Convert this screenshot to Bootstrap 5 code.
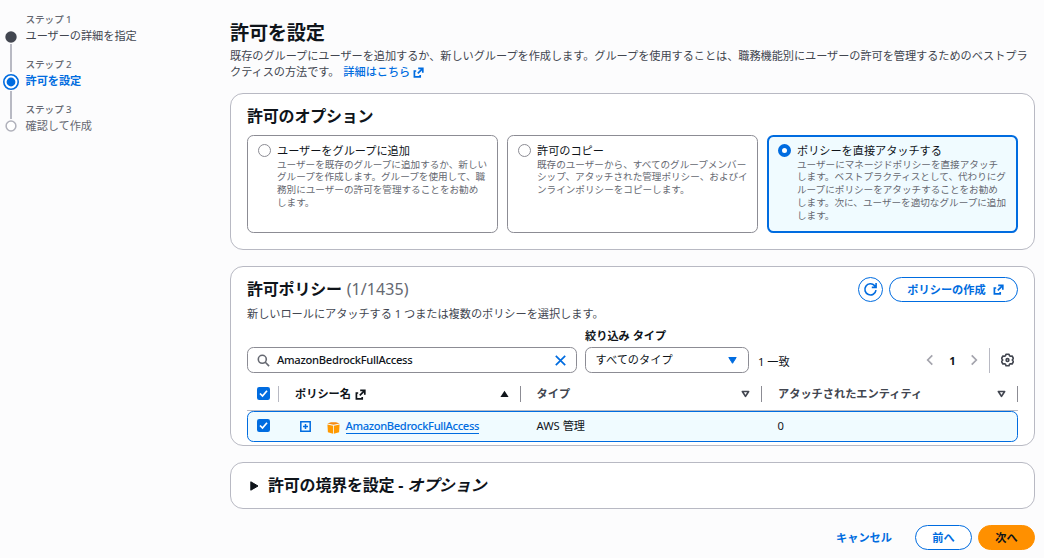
<!DOCTYPE html>
<html lang="ja">
<head>
<meta charset="utf-8">
<meta name="viewport" content="width=device-width, initial-scale=1">
<title>許可を設定</title>
<link href="https://cdn.jsdelivr.net/npm/bootstrap@5.3.0/dist/css/bootstrap.min.css" rel="stylesheet">
<style>
  :root { --ink:#0f141a; --blue:#006ce0; --body:#424650; --muted:#656871; --line:#b8b9c3; --ctl:#8c8c94; }
  body { font-family:"Noto Sans","Noto Sans CJK JP",sans-serif; font-size:11.2px; line-height:16px; color:var(--ink); background:#fcfcfd; overflow:hidden; white-space:nowrap; }
  svg { display:block; flex:none; }
  a { color:var(--blue); text-decoration:none; }
  .app { height:558px; }

  /* step navigation */
  .steps { width:230px; padding-top:11px; color:var(--body); }
  .rail { width:26px; }
  .steps ol { padding-top:1px; margin-left:-.5px; }
  .steps li { height:45px; letter-spacing:-.05px; }
  .step-no { font-size:9.6px; line-height:16px; color:var(--muted); font-weight:500; }
  .step-on { color:var(--blue); font-weight:700; }
  .step-off { color:var(--muted); }

  /* page heading */
  main { width:805px; padding-top:20px; }
  h1 { font-size:19.2px; line-height:25px; font-weight:700; letter-spacing:-.25px; }
  h2 { font-size:16px; line-height:20px; font-weight:700; letter-spacing:-.2px; }
  .intro { color:var(--body); line-height:16px; height:45px; padding-top:3px; letter-spacing:-.06px; }
  .intro a { margin-left:1px; letter-spacing:-.04px; }
  .panel { background:#fff; border:1px solid var(--line); border-radius:13px; padding:0 16px; }

  /* permission options */
  #opts { height:157px; margin-top:3px; }
  #opts h2 { margin:0; padding:12px 0 9px; }
  .options { display:grid; grid-template-columns:repeat(3,251px); gap:9px; }
  .option { height:98px; border:1px solid var(--ctl); border-radius:6.4px; padding:7px 0 0 10px; gap:6px; }
  .option.picked { border:2px solid var(--blue); background:#f0fbff; padding:6px 0 0 9px; }
  .option p { font-size:9.6px; line-height:12.8px; color:var(--muted); margin-top:-.4px; }
  .option .ttl { line-height:16px; letter-spacing:-.04px; }
  .dot { width:13px; height:13px; border:1px solid var(--ctl); border-radius:50%; margin-top:1px; flex:none; background:#fff; }
  .picked .dot { border:4px solid var(--blue); }

  /* policies */
  #policies { height:180px; margin-top:16px; }
  .count { color:var(--muted); letter-spacing:.05px; font-weight:400; margin-left:1px; }
  .pill { border:1.5px solid var(--blue); color:var(--blue); border-radius:13px; height:25px; font-weight:700; background:#fff; }
  .field { height:26px; border:1px solid var(--ctl); border-radius:6.4px; background:#fff; }
  .latin { letter-spacing:-.28px; font-weight:500; }
  .acts { gap:6px; padding-top:10px; }
  .sub { color:var(--body); padding-top:4px; height:26px; letter-spacing:-.04px; }
  .lbl { margin-bottom:3px; }
  .tools { height:45px; }
  .pager { height:26px; }
  .pg { width:36px; text-align:center; padding:1px 0 0 1px; }
  .vr-line { width:1px; height:25px; background:var(--line); margin:0 11px 0 11px; }
  .pager > svg:last-child { margin-right:4px; }
  .cols { display:grid; grid-template-columns:32px 242px 241px 256px; align-items:center; }
  .head-row { height:34px; margin-top:4px; border-bottom:1px solid var(--line); color:var(--body); font-weight:700; }
  .head-row > div { height:16px; display:flex; align-items:center; border-right:1px solid var(--ctl); }
  .hit { height:31px; border:1px solid var(--blue); border-radius:6.4px; background:#f0fbff; }
  .hit .cell { padding:0 0 2px 14.5px; }
  .lnk { border-bottom:1px solid var(--blue); line-height:14px; font-weight:500; letter-spacing:-.36px; margin-left:-.5px; }

  /* boundary and actions */
  #boundary { height:47px; margin-top:16px; padding:0 16px 2px 19px; gap:9px; }
  .foot { height:49px; padding-top:16px; gap:6px; }
  .next { background:#ff9000; border-color:#ff9000; color:var(--ink); }
  .cancel { line-height:25px; margin-right:17px; }
</style>
</head>
<body>
<svg width="0" height="0" class="position-absolute">
  <symbol id="ext" viewBox="0 0 11 11"><path d="M3.2 4H1.4v5.8h5.8V8M5.2 1.4h4.6v4.4M9.6 1.6L4.8 6.4" fill="none" stroke="currentColor" stroke-width="1.7"/></symbol>
  <symbol id="chk" viewBox="0 0 13 13"><rect width="13" height="13" rx="2.2" fill="#006ce0"/><path d="M3 6.5l2.5 2.6L10 3.8" fill="none" stroke="#fff" stroke-width="1.7"/></symbol>
  <symbol id="sort" viewBox="0 0 9 8"><path d="M1.4 1.5h6.2L4.5 6.4z" fill="none" stroke="currentColor" stroke-width="1.7" stroke-linejoin="round"/></symbol>
</svg>
<div class="app d-flex">
  <nav class="steps d-flex align-items-start">
    <svg class="rail" width="26" height="125" viewBox="0 11 26 125">
      <path d="M11 44v28M11 91v28" stroke="#b8b9c3" stroke-width="2"/>
      <circle cx="11" cy="37" r="5.7" fill="#424650"/>
      <circle cx="11" cy="82" r="7.2" fill="#fff" stroke="#006ce0" stroke-width="1.6"/><circle cx="11" cy="82" r="4.4" fill="#006ce0"/>
      <circle cx="11" cy="126" r="4.9" fill="#fff" stroke="#b0b1bb" stroke-width="1.5"/>
    </svg>
    <ol class="list-unstyled mb-0">
      <li><div class="step-no">ステップ 1</div><div>ユーザーの詳細を指定</div></li>
      <li><div class="step-no">ステップ 2</div><div class="step-on">許可を設定</div></li>
      <li><div class="step-no">ステップ 3</div><div class="step-off">確認して作成</div></li>
    </ol>
  </nav>
  <main>
    <h1 class="m-0">許可を設定</h1>
    <p class="intro mb-0">既存のグループにユーザーを追加するか、新しいグループを作成します。グループを使用することは、職務機能別にユーザーの許可を管理するためのベストプラ<br>クティスの方法です。 <a href="#" class="fw-medium">詳細はこちら <svg class="d-inline-block align-middle" width="11" height="11"><use href="#ext"/></svg></a></p>

    <section class="panel" id="opts">
      <h2>許可のオプション</h2>
      <div class="options">
        <div class="option d-flex"><span class="dot"></span><div><div class="ttl">ユーザーをグループに追加</div><p class="mb-0">ユーザーを既存のグループに追加するか、新しい<br>グループを作成します。グループを使用して、職<br>務別にユーザーの許可を管理することをお勧め<br>します。</p></div></div>
        <div class="option d-flex"><span class="dot"></span><div><div class="ttl">許可のコピー</div><p class="mb-0">既存のユーザーから、すべてのグループメンバー<br>シップ、アタッチされた管理ポリシー、およびイ<br>ンラインポリシーをコピーします。</p></div></div>
        <div class="option picked d-flex"><span class="dot"></span><div><div class="ttl">ポリシーを直接アタッチする</div><p class="mb-0">ユーザーにマネージドポリシーを直接アタッチ<br>します。ベストプラクティスとして、代わりにグ<br>ループにポリシーをアタッチすることをお勧め<br>します。次に、ユーザーを適切なグループに追加<br>します。</p></div></div>
      </div>
    </section>

    <section class="panel" id="policies">
      <div class="d-flex justify-content-between">
        <h2 class="m-0 pt-2 mt-1">許可ポリシー <span class="count">(1/1435)</span></h2>
        <div class="d-flex acts">
          <button class="pill p-0 d-flex align-items-center justify-content-center" style="width:25px" aria-label="更新"><svg width="15" height="15" viewBox="0 0 15 15" fill="none" stroke="currentColor" stroke-width="1.6"><path d="M13 8.2A5.6 5.6 0 1 1 11.6 3.6L13 5.2M13.1 1v4.4H8.8"/></svg></button>
          <button class="pill p-0 d-flex align-items-center justify-content-center gap-2" style="width:129px"><span class="ps-1">ポリシーの作成</span><svg style="margin-left:-1px" width="11" height="11"><use href="#ext"/></svg></button>
        </div>
      </div>
      <div class="sub">新しいロールにアタッチする 1 つまたは複数のポリシーを選択します。</div>
      <div class="d-flex align-items-end tools">
        <div class="field d-flex align-items-center" style="width:330px;padding:0 10px 0 9px">
          <svg width="13" height="13" viewBox="0 0 13 13" fill="none" stroke="#656871" stroke-width="1.6"><circle cx="5.3" cy="5.3" r="4"/><path d="M8.3 8.3l3.8 3.8"/></svg>
          <span class="flex-grow-1 latin" style="padding-left:7px">AmazonBedrockFullAccess</span>
          <svg width="11" height="11" viewBox="0 0 11 11" stroke="#006ce0" stroke-width="1.7"><path d="M.8.8l9.4 9.4M10.2.8L.8 10.2"/></svg>
        </div>
        <div class="ms-2">
          <div class="fw-bold lbl">絞り込み タイプ</div>
          <div class="field d-flex align-items-center justify-content-between" style="width:164px;padding:0 11px 0 9.5px"><span>すべてのタイプ</span><svg width="9" height="7" viewBox="0 0 9 7"><path d="M.8.5h7.4L4.5 6.3z" fill="#006ce0" stroke="#006ce0" stroke-linejoin="round"/></svg></div>
        </div>
        <div style="margin:0 auto 3px 9px">1 一致</div>
        <div class="d-flex align-items-center pager">
          <svg width="8" height="12" viewBox="0 0 8 12" fill="none" stroke="#a4a4ad" stroke-width="1.7"><path d="M6.3 1.4L1.7 6l4.6 4.6"/></svg>
          <b class="pg">1</b>
          <svg width="8" height="12" viewBox="0 0 8 12" fill="none" stroke="#a4a4ad" stroke-width="1.7"><path d="M1.7 1.4L6.3 6l-4.6 4.6"/></svg>
          <span class="vr-line"></span>
          <svg width="13" height="14" viewBox="0 0 13 14" fill="none" stroke="#424650" stroke-width="1.6" stroke-linejoin="round"><path d="M5 1.2h3l.5 1.5 1.1.6 1.5-.3 1.3 2.4L11.3 7l1.1 1.6-1.3 2.4-1.5-.3-1.1.6-.5 1.5H5l-.5-1.5-1.1-.6-1.5.3L.6 8.6 1.7 7 .6 5.4 1.9 3l1.5.3 1.1-.6z"/><circle cx="6.5" cy="7" r="1.4"/></svg>
        </div>
      </div>
      <div class="cols head-row">
        <div style="padding-left:10px;border-color:#b8b9c3"><svg width="13" height="13"><use href="#chk"/></svg></div>
        <div style="padding:0 11px 0 16px;color:var(--ink)">ポリシー名<svg class="me-auto" style="margin:2px 0 0 4px" width="11" height="11"><use href="#ext"/></svg><svg width="9" height="8" viewBox="0 0 9 8"><path d="M4.5.7L8.6 7H.4z" fill="#0f141a"/></svg></div>
        <div class="justify-content-between" style="padding:0 11px 0 15.5px">タイプ<svg width="9" height="8"><use href="#sort"/></svg></div>
        <div class="justify-content-between" style="padding:0 11px 0 16px">アタッチされたエンティティ<svg width="9" height="8"><use href="#sort"/></svg></div>
      </div>
      <div class="cols hit">
        <div style="padding:0 0 2px 9px"><svg width="13" height="13"><use href="#chk"/></svg></div>
        <div class="d-flex align-items-center" style="padding-left:20px">
          <svg width="11" height="11" viewBox="0 0 11 11" fill="none" stroke="#006ce0" stroke-width="1.5"><path d="M.8.8h9.4v9.4H.8zM5.5 3v5M3 5.5h5"/></svg>
          <svg style="margin:1px 6px 0 16px" width="13" height="13" viewBox="0 0 13 13"><path d="M.4 3.5L6.1 4.7V12.8L.9 11.3zM12.6 3.5L6.9 4.7V12.8l5.2-1.5z" fill="#ff9900"/><path d="M.4 2.5L4 1.2h5l3.6 1.3-6.1 1.3z" fill="#f68a12"/></svg>
          <a href="#" class="lnk">AmazonBedrockFullAccess</a>
        </div>
        <div class="cell">AWS 管理</div>
        <div class="cell">0</div>
      </div>
    </section>

    <section class="panel d-flex align-items-center" id="boundary">
      <svg style="margin-top:2px" width="9" height="10" viewBox="0 0 9 10"><path d="M.8.8L8 5 .8 9.2z" fill="#0f141a" stroke="#0f141a" stroke-linejoin="round"/></svg>
      <h2 class="m-0">許可の境界を設定 - <i>オプション</i></h2>
    </section>
    <div class="foot d-flex justify-content-end">
      <a href="#" class="fw-bold cancel">キャンセル</a>
      <button class="pill p-0" style="width:57px">前へ</button>
      <button class="pill next p-0" style="width:57px">次へ</button>
    </div>
  </main>
</div>
<script src="https://cdn.jsdelivr.net/npm/bootstrap@5.3.0/dist/js/bootstrap.bundle.min.js"></script>
</body>
</html>
